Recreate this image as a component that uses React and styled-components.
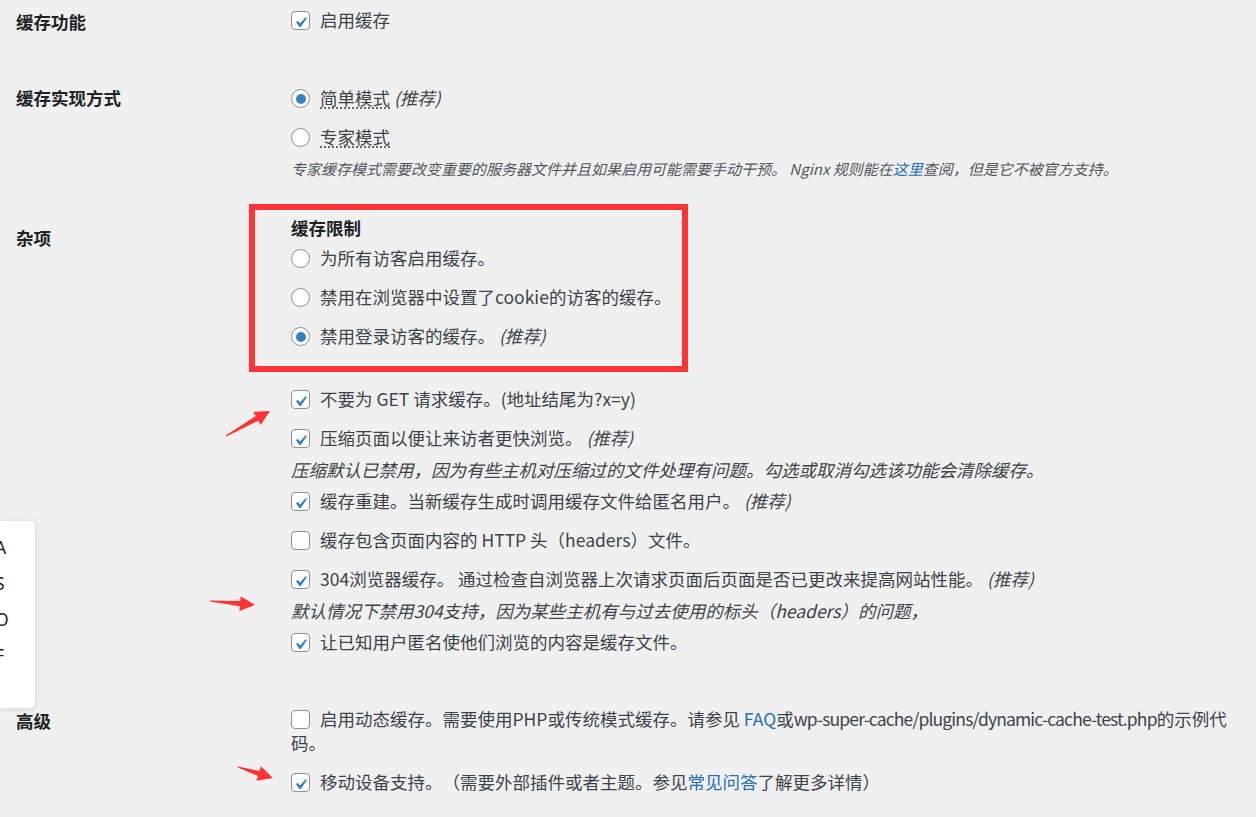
import React from 'react';
import styled, { createGlobalStyle } from 'styled-components';

// WP Super Cache settings screen (zh-CN), with red annotation marks
const GlobalStyle = createGlobalStyle`
  html, body {
    margin: 0;
    padding: 0;
    background: #f0f0f1;
  }
  body {
    font-family: "Noto Sans CJK SC", "Noto Sans", sans-serif;
    font-size: 17.5px;
    color: #3c434a;
    text-spacing-trim: space-all;
    overflow: hidden;
  }
`;

const Page = styled.div`
  position: relative;
  height: 817px;
  overflow: hidden;
  padding: 0 5px 0 16px;
  box-sizing: border-box;
`;

const Row = styled.div`
  display: grid;
  grid-template-columns: 275px 1fr;
  padding: ${(p) => p.$top ?? 18}px 0 18px;
`;

const Th = styled.div`
  padding-top: ${(p) => p.$pad ?? 9}px;
  font-weight: 700;
  color: #1d2327;
  line-height: 24px;
`;

const Td = styled.div`
  display: flex;
  flex-direction: column;
  align-items: stretch;
  min-width: 0;
`;

const Option = styled.label`
  display: block;
  margin: 7px 0 8px;
  line-height: 24px;
`;

const Control = styled.span`
  position: relative;
  display: inline-block;
  box-sizing: border-box;
  width: 19px;
  height: 19px;
  margin: 3px 10px 0 0;
  vertical-align: top;
  background: #fff;
  border: 1px solid #8c8f94;
  border-radius: ${(p) => (p.$radio ? '50%' : '4px')};

  ${(p) =>
    p.$radio && p.$checked
      ? `&::before {
          content: "";
          position: absolute;
          left: 3.5px;
          top: 3.5px;
          width: 10px;
          height: 10px;
          border-radius: 50%;
          background: #3582c4;
        }`
      : ''}

  svg {
    position: absolute;
    left: -2.5px;
    top: -0.5px;
    width: 21px;
    height: 21px;
  }
`;

const Abbr = styled.span`
  text-decoration: underline dotted #50575e;
  text-underline-offset: 3px;
`;

const Em = styled.i`
  font-style: italic;
`;

const Link = styled.a`
  color: #2271b1;
  text-decoration: none;
`;

// the plugin path is set tighter, as the original's Latin face is narrower
const FilePath = styled.span`
  letter-spacing: -0.85px;
`;

const Desc = styled.p`
  margin: 0;
  line-height: 24px;
  font-style: italic;
  font-size: ${(p) => (p.$small ? '15px' : '17.5px')};
  color: ${(p) => (p.$small ? '#50575e' : '#3c434a')};
`;

const Fieldset = styled.div`
  position: relative;
  display: flex;
  flex-direction: column;
  margin-bottom: 24px;

  &::before {
    content: "";
    position: absolute;
    left: -42px;
    top: -13px;
    bottom: -16px;
    width: 439px;
    box-sizing: border-box;
    border: 6px solid #ff3535;
    pointer-events: none;
  }
`;

const Legend = styled.div`
  font-weight: 700;
  color: #1d2327;
  line-height: 22px;
`;

const SidePanel = styled.div`
  position: absolute;
  left: 0;
  top: 521px;
  width: 35px;
  height: 187px;
  padding-top: 8px;
  box-sizing: border-box;
  background: #fff;
  border-radius: 0 5px 5px 0;
  box-shadow: 0 1px 6px rgba(0, 0, 0, 0.12);
  overflow: hidden;
`;

const SideItem = styled.div`
  height: 36px;
  line-height: 36px;
  margin-left: -5px;
  color: #1d2327;
  font-family: "Noto Sans", sans-serif;
  font-size: 17.5px;
`;

const Marks = styled.svg`
  position: absolute;
  left: 0;
  top: 0;
  width: 1256px;
  height: 817px;
  pointer-events: none;
`;

const Check = () => (
  <svg viewBox="0 0 20 20" aria-hidden="true">
    <path d="M14.83 4.89l1.34.94-5.81 8.38H9.02L5.78 9.67l1.34-1.25 2.57 2.4z" fill="#3582c4" />
  </svg>
);

const Box = ({ checked, radio }) => (
  <Control $radio={radio} $checked={checked}>
    {!radio && checked ? <Check /> : null}
  </Control>
);

const arrowPoints = ([x1, y1], [x2, y2]) => {
  const dx = x2 - x1;
  const dy = y2 - y1;
  const len = Math.hypot(dx, dy);
  const ux = dx / len;
  const uy = dy / len;
  const nx = -uy;
  const ny = ux;
  const bx = x2 - ux * 15;
  const by = y2 - uy * 15;
  const pt = (x, y, k) => `${(x + nx * k).toFixed(1)},${(y + ny * k).toFixed(1)}`;
  return [
    pt(x1, y1, 0.6),
    pt(bx, by, 2.6),
    pt(bx, by, 7.5),
    `${x2},${y2}`,
    pt(bx, by, -7.5),
    pt(bx, by, -2.6),
    pt(x1, y1, -0.6),
  ].join(' ');
};

const arrows = [
  [[226, 436], [270, 411]],
  [[210, 601], [255, 605]],
  [[238, 767], [273, 778]],
];

export default function App() {
  return (
    <>
      <GlobalStyle />
      <Page>
        <Row $top={1}>
          <Th>缓存功能</Th>
          <Td>
            <Option><Box checked />启用缓存</Option>
          </Td>
        </Row>

        <Row $top={21}>
          <Th $pad={7}>缓存实现方式</Th>
          <Td>
            <Option><Box radio checked /><Abbr>简单模式</Abbr> <Em>(推荐)</Em></Option>
            <Option><Box radio /><Abbr>专家模式</Abbr></Option>
            <Desc $small>
              专家缓存模式需要改变重要的服务器文件并且如果启用可能需要手动干预。 Nginx 规则能在<Link href="#">这里</Link>查阅，但是它不被官方支持。
            </Desc>
          </Td>
        </Row>

        <Row>
          <Th>杂项</Th>
          <Td>
            <Fieldset>
              <Legend>缓存限制</Legend>
              <Option><Box radio />为所有访客启用缓存。</Option>
              <Option><Box radio />禁用在浏览器中设置了cookie的访客的缓存。</Option>
              <Option><Box radio checked />禁用登录访客的缓存。 <Em>(推荐)</Em></Option>
            </Fieldset>
            <Option><Box checked />不要为 GET 请求缓存。(地址结尾为?x=y)</Option>
            <Option><Box checked />压缩页面以便让来访者更快浏览。 <Em>(推荐)</Em></Option>
            <Desc>压缩默认已禁用，因为有些主机对压缩过的文件处理有问题。勾选或取消勾选该功能会清除缓存。</Desc>
            <Option><Box checked />缓存重建。当新缓存生成时调用缓存文件给匿名用户。 <Em>(推荐)</Em></Option>
            <Option><Box />缓存包含页面内容的 HTTP 头（headers）文件。</Option>
            <Option><Box checked />304浏览器缓存。 通过检查自浏览器上次请求页面后页面是否已更改来提高网站性能。 <Em>(推荐)</Em></Option>
            <Desc>默认情况下禁用304支持，因为某些主机有与过去使用的标头（headers）的问题，</Desc>
            <Option><Box checked />让已知用户匿名使他们浏览的内容是缓存文件。</Option>
          </Td>
        </Row>

        <Row $top={20}>
          <Th>高级</Th>
          <Td>
            <Option>
              <Box />启用动态缓存。需要使用PHP或传统模式缓存。请参见 <Link href="#">FAQ</Link>或<FilePath>wp-super-cache/plugins/dynamic-cache-test.php</FilePath>的示例代码。
            </Option>
            <Option><Box checked />移动设备支持。（需要外部插件或者主题。参见<Link href="#">常见问答</Link>了解更多详情）</Option>
          </Td>
        </Row>

        <SidePanel>
          <SideItem>A</SideItem>
          <SideItem>S</SideItem>
          <SideItem>O</SideItem>
          <SideItem>F</SideItem>
        </SidePanel>

        <Marks viewBox="0 0 1256 817" aria-hidden="true">
          {arrows.map(([a, b], i) => (
            <polygon key={i} points={arrowPoints(a, b)} fill="#ff3535" />
          ))}
        </Marks>
      </Page>
    </>
  );
}
